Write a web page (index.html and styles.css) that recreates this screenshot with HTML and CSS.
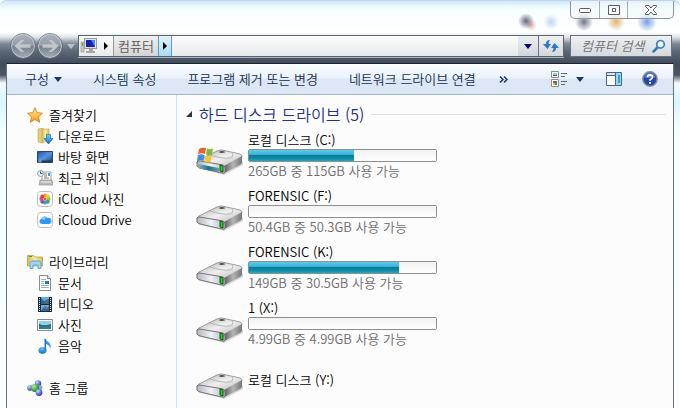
FILE: index.html
```html
<!DOCTYPE html>
<html lang="ko">
<head>
<meta charset="UTF-8">
<meta name="viewport" content="width=device-width, initial-scale=1.0">
<title>컴퓨터</title>
<link rel="stylesheet" href="styles.css">
</head>
<body>
<svg class="defs" aria-hidden="true">
    <defs>
        <linearGradient id="steelTop" x1="0" y1="0" x2="1" y2="1">
            <stop offset="0" stop-color="#a9a9a9"/>
            <stop offset=".5" stop-color="#f0f0f0"/>
            <stop offset="1" stop-color="#b8b8b8"/>
        </linearGradient>
        <linearGradient id="steelFront" x1="0" y1="0" x2="1" y2="0">
            <stop offset="0" stop-color="#b4b4bc"/>
            <stop offset=".5" stop-color="#f1f1f8"/>
            <stop offset="1" stop-color="#b8b8c0"/>
        </linearGradient>
        <linearGradient id="steelSide" x1="0" y1="0" x2="1" y2="0">
            <stop offset="0" stop-color="#5c5c5c"/>
            <stop offset=".5" stop-color="#b4b4b4"/>
            <stop offset="1" stop-color="#777"/>
        </linearGradient>
        <linearGradient id="teal" x1="0" y1="0" x2="1" y2="0">
            <stop offset="0" stop-color="#8fb3bd"/>
            <stop offset=".5" stop-color="#1d7088"/>
            <stop offset="1" stop-color="#6aa0ae"/>
        </linearGradient>
        <linearGradient id="blueScreen" x1="0" y1="0" x2="1" y2="1">
            <stop offset="0" stop-color="#1d4fa5"/>
            <stop offset=".5" stop-color="#5b93dc"/>
            <stop offset="1" stop-color="#153d80"/>
        </linearGradient>
        <linearGradient id="folder" x1="0" y1="0" x2="1" y2="0">
            <stop offset="0" stop-color="#d9b95c"/>
            <stop offset=".5" stop-color="#f8eaa8"/>
            <stop offset="1" stop-color="#dcc064"/>
        </linearGradient>
        <linearGradient id="starFill" x1="0" y1="0" x2="0" y2="1">
            <stop offset="0" stop-color="#fff0a0"/>
            <stop offset="1" stop-color="#f59a1c"/>
        </linearGradient>
        <linearGradient id="blueDown" x1="0" y1="0" x2="0" y2="1">
            <stop offset="0" stop-color="#6fd0fb"/>
            <stop offset="1" stop-color="#0b6fc8"/>
        </linearGradient>
        <radialGradient id="ballBlue" cx=".35" cy=".3" r=".7">
            <stop offset="0" stop-color="#c9d8ff"/>
            <stop offset="1" stop-color="#2438a8"/>
        </radialGradient>
        <radialGradient id="ballGreen" cx=".35" cy=".3" r=".7">
            <stop offset="0" stop-color="#b4f0a0"/>
            <stop offset="1" stop-color="#17841c"/>
        </radialGradient>
        <linearGradient id="navBall" x1="0" y1="0" x2="0" y2="1">
            <stop offset="0" stop-color="#a9b1b9"/>
            <stop offset=".48" stop-color="#949da6"/>
            <stop offset=".5" stop-color="#737e89"/>
            <stop offset="1" stop-color="#a0acb6"/>
        </linearGradient>
    </defs>
    <symbol id="drive" viewBox="0 0 48 27">
        <path d="M2 19 28 26 47 16 47 12 28 21Z" fill="#000" opacity=".15"/>
        <path d="M1 14 Q1 12 3 11 L21 2 Q23 1 26 1 L44 5 Q46 6 46 8 L28 18 2 15Z" fill="url(#steelTop)" stroke="#858585" stroke-width=".8"/>
        <path d="M28 17 46 7 46 13 Q46 15 44 16 L28 24Z" fill="url(#steelSide)"/>
        <path d="M1 13 Q2 12 4 12 L27 16 Q29 17 29 19 V23 Q29 25 26 24 L4 19 Q1 18 1 17Z" fill="url(#steelFront)" stroke="#737373" stroke-width="1"/>
        <path d="M14 6 Q26 10 34 9 Q38 8 36 4" fill="none" stroke="#aaa" stroke-width=".8"/>
        <ellipse cx="26" cy="3" rx="3" ry="1" fill="#555"/>
        <path d="M24 16 27 17V23L24 22Z" fill="#1ed01e" stroke="#175217" stroke-width="1"/>
    </symbol>
</svg>

<div class="window">
    <div class="caption">
        <button class="cap min" aria-label="최소화"><svg width="12" height="7"><rect x=".5" y="2.500" width="11" height="4" rx="1" fill="#fff" stroke="#555d6b"/></svg></button>
        <button class="cap max" aria-label="최대화"><svg width="12" height="10"><path d="M.5.5h11v9H.5zM4.500 3.500v3h3v-3z" fill="#fff" fill-rule="evenodd" stroke="#555d6b"/></svg></button>
        <button class="cap close" aria-label="닫기"><svg width="12" height="10"><path d="M.5.500H4L6 3 8 .5h3.500v1L8 5l3.500 3.500v1H8L6 7 4 9.500H.5v-1L4 5 .5 1.500z" fill="#fff" stroke="#555d6b"/></svg></button>
    </div>

    <div class="navbar">
        <div class="history">
            <button class="round" aria-label="뒤로"><svg width="26" height="26" viewBox="0 0 26 26"><circle cx="13" cy="13" r="11.500" fill="url(#navBall)" stroke="#c3cdd4" stroke-width="1"/><circle cx="13" cy="13" r="12.500" fill="none" stroke="#616d78" stroke-width=".8"/><path d="M4.500 13 11 7h3.500l-4.500 4.300h10.500v3.400H10L14.500 19H11z" fill="#bfc6cb"/></svg></button>
            <button class="round" aria-label="앞으로"><svg width="26" height="26" viewBox="0 0 26 26"><circle cx="13" cy="13" r="11.500" fill="url(#navBall)" stroke="#c3cdd4" stroke-width="1"/><circle cx="13" cy="13" r="12.500" fill="none" stroke="#616d78" stroke-width=".8"/><path d="M21.500 13 15 7h-3.500l4.500 4.300H5.500v3.400H16L11.500 19H15z" fill="#bfc6cb"/></svg></button>
            <button class="recent" aria-label="최근 페이지"><svg width="8" height="5"><path d="M0 0h8L4 5z" fill="#b9c3cc"/></svg></button>
        </div>
        <div class="address">
            <svg class="pc" width="18" height="16" viewBox="0 0 18 16"><rect x="1" y="4" width="3" height="10" fill="#c8ccc8" stroke="#8a8f8a" stroke-width=".6"/><path d="M2 5h1v3H2z" fill="#2cbf2c"/><rect x="4.500" y=".5" width="12" height="10" fill="#e4e4e4" stroke="#999"/><path d="M6 2h9v7H6z" fill="#1620b8"/><path d="M11 2h4v7z" fill="#4a86e8"/><path d="M9 11h4v2h2v2H6v-2h3z" fill="#a5a5a5"/></svg>
            <button class="step" aria-label="루트"><svg width="4" height="8"><path d="M0 0l4 4-4 4z" fill="#000"/></svg></button>
            <button class="crumb">컴퓨터</button>
            <button class="step active" aria-label="하위 폴더"><svg width="4" height="8"><path d="M0 0l4 4-4 4z" fill="#000"/></svg></button>
            <button class="drop" aria-label="이전 위치"><svg width="8" height="5"><path d="M0 0h8L4 5z" fill="#0a0a6e"/></svg></button>
            <button class="refresh" aria-label="새로 고침"><svg width="16" height="14" viewBox="0 0 16 14"><path d="M7 1Q3 1 3 5H0l4.500 5L8 5H5.500Q5.500 3 7 1Z" fill="#2f78c4"/><path d="M9 13q4 0 4-4h3l-4.500-5L8 9h2.500q0 2-1.500 4Z" fill="#2f78c4"/></svg></button>
        </div>
        <form class="search">
            <input type="text" placeholder="컴퓨터 검색" aria-label="컴퓨터 검색">
            <button type="button" aria-label="검색"><svg width="14" height="14" viewBox="0 0 14 14"><path d="M1.500 12.500 6 8" stroke="#3b74b5" stroke-width="2.500" stroke-linecap="round"/><circle cx="8.500" cy="5.300" r="3.800" fill="#eef6fd" stroke="#3d80c6" stroke-width="1.700"/></svg></button>
        </form>
    </div>

    <div class="frame">
        <div class="toolbar">
            <button>구성 <svg width="8" height="5"><path d="M0 0h8L4 5z" fill="#1e395b"/></svg></button>
            <button>시스템 속성</button>
            <button>프로그램 제거 또는 변경</button>
            <button>네트워크 드라이브 연결</button>
            <button class="more" aria-label="추가 명령"><svg width="9" height="7"><path d="M1 .5l3 3-3 3M5 .5l3 3-3 3" fill="none" stroke="#1e395b" stroke-width="1.500"/></svg></button>
            <div class="tools">
                <button aria-label="보기 변경"><svg width="16" height="16"><path d="M.5.5h7v6h-7zM.5 8.500h7v7h-7z" fill="#fff" stroke="#8d8d8d"/><path d="M2 2h4v2H2z" fill="#8cc8ef"/><path d="M2 4h4v1H2z" fill="#25703c"/><path d="M2 10h2v2H2z" fill="#d33"/><path d="M4 10h2v2H4z" fill="#37c"/><path d="M2 12h2v2H2z" fill="#eb2"/><path d="M4 12h2v2H4z" fill="#2a3"/><path d="M10 2.500h6M10 5.500h4M10 10.500h6M10 13.500h4" stroke="#56657a"/></svg></button>
                <button aria-label="보기 옵션"><svg width="8" height="5"><path d="M0 0h8L4 5z" fill="#1e395b"/></svg></button>
                <button class="pane" aria-label="미리 보기 창"><svg width="16" height="14"><path d="M.5.500h15v13H.5z" fill="#fff" stroke="#4a6684"/><path d="M1 1h14v2H1z" fill="#d7e1ec"/><path d="M1 3.500h9M9.500 1v12" stroke="#4a6684"/><path d="M10 1h5v12h-5z" fill="#8fdcee"/><path d="M12 3h2v8h-2z" fill="#4a9bc0"/></svg></button>
                <button aria-label="도움말"><svg width="16" height="16" viewBox="0 0 16 16"><circle cx="8" cy="8" r="7.200" fill="#2444ae" stroke="#8a8f96" stroke-width="1.500"/><path d="M2.500 7a5.500 5.500 0 0 1 11 0z" fill="#6d8fe0" opacity=".6"/><path d="M5.500 6.200Q5.500 4 8 4t2.500 2.100Q10.500 7.500 8 9v.8" fill="none" stroke="#fff" stroke-width="1.800"/><path d="M7 11h2v1.800H7z" fill="#fff"/></svg></button>
            </div>
        </div>

        <div class="body">
            <nav class="sidebar">
                <ul>
                    <li class="group"><a href="#"><svg width="16" height="16" viewBox="0 0 16 16"><path d="M8 .7l2.200 5 5.300.5-4 3.700 1.200 5.400L8 12.500l-4.700 2.800 1.200-5.400-4-3.700 5.300-.5z" fill="url(#starFill)" stroke="#d8811c" stroke-width=".9"/></svg>즐겨찾기</a></li>
                    <li><a href="#"><svg width="16" height="16" viewBox="0 0 16 16"><path d="M1 1l5-1v15l-5-1z" fill="#e5cd7e" stroke="#c3a249" stroke-width=".6"/><path d="M5 1h7v13H5z" fill="url(#folder)" stroke="#c3a249" stroke-width=".6"/><path d="M9.500 6.500h4v4H16L11.500 16 7 10.500h2.500z" fill="url(#blueDown)" stroke="#0b5ba6" stroke-width=".6"/></svg>다운로드</a></li>
                    <li><a href="#"><svg width="16" height="16" viewBox="0 0 16 16"><path d="M.5 2.500h15v11H.5z" fill="url(#blueScreen)" stroke="#29456f"/><path d="M1 11.500h14V13H1z" fill="#26364f"/><circle cx="3" cy="12" r="1.700" fill="#48aee9"/><path d="M2 11h1v1H2z" fill="#f60"/></svg>바탕 화면</a></li>
                    <li><a href="#"><svg width="16" height="16" viewBox="0 0 16 16"><path d="M5 2h9v9H5z" fill="#fff" stroke="#8e8e8e" stroke-width=".8"/><path d="M7 4h3M7 6h3M7 8h5" stroke="#777"/><path d="M11 3h2v3h-2z" fill="#4c97d3"/><path d="M3 10h12l1 5H2z" fill="#b9bbbd" stroke="#8b8b8b" stroke-width=".6"/><path d="M4 12h10" stroke="#eee"/><circle cx="3.500" cy="3.500" r="3" fill="#edf4fa" stroke="#879bb0"/><path d="M3.500 1.500v2h2" fill="none" stroke="#456"/></svg>최근 위치</a></li>
                    <li><a href="#"><svg width="16" height="16" viewBox="0 0 16 16"><rect x=".5" y=".5" width="15" height="15" rx="3" fill="#fff" stroke="#bdbdbd"/><circle cx="8" cy="4.500" r="2" fill="#f7941d"/><circle cx="10.700" cy="5.500" r="2" fill="#f0d020"/><circle cx="11.600" cy="8" r="2" fill="#98ca3c"/><circle cx="10.700" cy="10.700" r="2" fill="#2caa72"/><circle cx="8" cy="11.600" r="2" fill="#3c9bd8"/><circle cx="5.300" cy="10.700" r="2" fill="#7558b0"/><circle cx="4.400" cy="8" r="2" fill="#d64b90"/><circle cx="5.300" cy="5.500" r="2" fill="#ec3a34"/><circle cx="8" cy="8" r="1.500" fill="#b06a3c"/></svg>iCloud 사진</a></li>
                    <li><a href="#"><svg width="16" height="16" viewBox="0 0 16 16"><rect x=".5" y=".5" width="15" height="15" rx="3" fill="#fff" stroke="#bdbdbd"/><path d="M4.800 12a2.500 2.500 0 0 1-.6-4.900A3.600 3.600 0 0 1 10.500 6 3 3 0 0 1 12 12z" fill="#2f97f0"/><path d="M4.200 7.200a3.500 3.500 0 0 1 6-1.500Q8 6 7.500 8.500 6 7 4.200 7.200z" fill="#7cc8fa"/></svg>iCloud Drive</a></li>
                </ul>
                <ul>
                    <li class="group"><a href="#"><svg width="16" height="16" viewBox="0 0 16 16"><path d="M.5 3V1.500h6L8 3h7.500v9H.5z" fill="url(#folder)" stroke="#b99c46" stroke-width=".8"/><path d="M2 2h3v1H2z" fill="#3ba83b"/><path d="M3 14.500V9q0-2 2-2h7q2 0 2 2v5.500h-3V11H6v3.500z" fill="#9ed8ee" stroke="#4a9fc6" stroke-width=".8"/></svg>라이브러리</a></li>
                    <li><a href="#"><svg width="16" height="16" viewBox="0 0 16 16"><path d="M2.500.5h8l3 3v12h-11z" fill="#fff" stroke="#8c8c8c"/><path d="M10.500.5v3h3" fill="#ddd" stroke="#8c8c8c"/><path d="M4 4.500h5M4 6.500h3M4 8.500h3M4 10.500h8M4 12.500h8" stroke="#9bb4d4"/><path d="M8 6h4v3H8z" fill="#2b76b9"/></svg>문서</a></li>
                    <li><a href="#"><svg width="16" height="16" viewBox="0 0 16 16"><path d="M1 1h14v15H1z" fill="#222a31"/><path d="M4 1h8v7H4zM4 9h8v6H4z" fill="#5daeea"/><path d="M4 2l3 3 5-2v5H4zM4 15l3-4 2 2 3-3v5z" fill="#2568a8"/><path d="M8 6l3-2-1 4zM7 10l3 1-2 3z" fill="#b4552f"/><path d="M2.500 2v14M13.500 2v14" stroke="#fff" stroke-dasharray="1 1"/></svg>비디오</a></li>
                    <li><a href="#"><svg width="16" height="16" viewBox="0 0 16 16"><path d="M.5 2.500h15v11H.5z" fill="#fff" stroke="#8a8a8a"/><path d="M2 4h12v4H2z" fill="#92cdf2"/><path d="M2 8h12v4H2z" fill="#2c7aa6"/><path d="M2 6.500Q6 10 14 7v2.500H2z" fill="#2b7550"/></svg>사진</a></li>
                    <li><a href="#"><svg width="16" height="16" viewBox="0 0 16 16"><path d="M7.500 0q1 2 4 4 3.500 3 1.500 7 0-4-4-5v7z" fill="#3a9ad8"/><ellipse cx="5.500" cy="12.500" rx="3.800" ry="3" fill="url(#blueDown)" stroke="#1d75b6" stroke-width=".6"/><path d="M8.300 1v11.500" stroke="#1d75b6" stroke-width="1.500"/></svg>음악</a></li>
                </ul>
                <ul>
                    <li class="group"><a href="#"><svg width="16" height="16" viewBox="0 0 16 16"><circle cx="11" cy="3.500" r="3.200" fill="url(#ballBlue)"/><circle cx="3" cy="8" r="2.800" fill="url(#ballBlue)"/><circle cx="13" cy="7.500" r="2.500" fill="#8fa4d4"/><circle cx="8" cy="8" r="4" fill="url(#ballGreen)"/><circle cx="12" cy="12.500" r="3.400" fill="url(#ballBlue)"/></svg>홈 그룹</a></li>
                </ul>
            </nav>

            <main class="content">
                <h1><svg width="6" height="6"><path d="M6 0v6H0z" fill="#333"/></svg>하드 디스크 드라이브 (5)</h1>
                <ul class="drives">
                    <li>
                        <div class="disk">
                            <svg width="48" height="27"><use href="#drive"/></svg>
                            <svg class="flag" width="30" height="28" viewBox="0 0 30 28"><path d="M2 17 23 21V25L5 22Q2 21 2 20Z" fill="url(#teal)"/><path d="M3 2q3-2 7-1L9 7Q6 5.500 2 7z" fill="#e8602a"/><path d="M11 1.500q3 1.500 6 0L16 8q-3 1-6-.5z" fill="#7fba30"/><path d="M2 8q3-1.500 6.500 0l-1 6q-3-1.500-6.500 0z" fill="#3f8fd8"/><path d="M9.500 8.500q3 1.500 6 .5l-1 6q-3 1-6-.5z" fill="#f8c52c"/></svg>
                        </div>
                        <div class="info">
                            <label for="driveC">로컬 디스크 (C:)</label>
                            <progress id="driveC" value="56" max="100"></progress>
                            <span>265GB 중 115GB 사용 가능</span>
                        </div>
                    </li>
                    <li>
                        <div class="disk"><svg width="48" height="27"><use href="#drive"/></svg></div>
                        <div class="info">
                            <label for="driveF">FORENSIC (F:)</label>
                            <progress id="driveF" value="0" max="100"></progress>
                            <span>50.4GB 중 50.3GB 사용 가능</span>
                        </div>
                    </li>
                    <li>
                        <div class="disk"><svg width="48" height="27"><use href="#drive"/></svg></div>
                        <div class="info">
                            <label for="driveK">FORENSIC (K:)</label>
                            <progress id="driveK" value="80" max="100"></progress>
                            <span>149GB 중 30.5GB 사용 가능</span>
                        </div>
                    </li>
                    <li>
                        <div class="disk"><svg width="48" height="27"><use href="#drive"/></svg></div>
                        <div class="info">
                            <label for="driveX">1 (X:)</label>
                            <progress id="driveX" value="0" max="100"></progress>
                            <span>4.99GB 중 4.99GB 사용 가능</span>
                        </div>
                    </li>
                    <li>
                        <div class="disk"><svg width="48" height="27"><use href="#drive"/></svg></div>
                        <div class="info plain">로컬 디스크 (Y:)</div>
                    </li>
                </ul>
            </main>
        </div>
    </div>
</div>
</body>
</html>
```
FILE: styles.css
```css
* {
    box-sizing: border-box;
}
body {
    margin: 0;
    overflow: hidden;
    font-family: "Noto Sans CJK KR", sans-serif;
    font-size: 13px;
    font-weight: 350;
    line-height: 20px;
    color: #000;
}
ul {
    list-style: none;
    margin: 0;
    padding: 0;
}
button {
    display: flex;
    align-items: center;
    justify-content: center;
    border: 0;
    padding: 0;
    background: none;
    font: inherit;
    color: inherit;
    white-space: nowrap;
}
svg {
    display: block;
    flex: none;
}
.defs {
    position: absolute;
    width: 0;
    height: 0;
}

/* glass frame */
.window {
    display: flex;
    flex-direction: column;
    height: 100vh;
    padding: 0 6px;
    border-top: 1px solid #c3d2e4;
    border-radius: 6px 6px 0 0;
    background:
        radial-gradient(circle at 526px 20px, #626a7d 0, transparent 8px),
        radial-gradient(circle at 531px 24px, #f0aab4 0, transparent 6px),
        radial-gradient(circle at 551px 21px, #c3d3ef 0, transparent 8px),
        radial-gradient(circle at 584px 21px, #6e7784 0, transparent 9px),
        radial-gradient(circle at 616px 21px, #dfb577 0, transparent 9px),
        radial-gradient(circle at 647px 21px, #7ba0df 0, transparent 10px),
        linear-gradient(#cfe8fd 0, #f6ffff 8px, #fff 31px, #dfe5ea 36px, #7b8693 43px, #5b6675 51px, #414c5c 62px, #4b5666 74px, #f2fafd 82px, #d8f6ff 100px, #f4feff 130px, #fbffff 100%);
}
.caption {
    display: flex;
    flex: none;
    align-self: flex-end;
    height: 18px;
    border: 1px solid #8b949f;
    border-top: 0;
    border-radius: 0 0 5px 5px;
    background: #f3f9fc99;
}
.cap {
    width: 28px;
}
.cap + .cap {
    border-left: 1px solid #a5adb7;
}
.cap.close {
    width: 46px;
}
.navbar {
    display: flex;
    flex: none;
    align-items: center;
    height: 44px;
    padding: 14px 2px 4px 3px;
}
.history {
    display: flex;
    align-items: center;
}
.round {
    width: 27px;
    height: 26px;
}
.recent {
    width: 15px;
}
.address {
    display: flex;
    flex: 1;
    height: 22px;
    border: 1px solid #59636b;
    box-shadow: 0 1px 0 #a8b0b8;
    background: linear-gradient(#fbfbfb, #e8e9eb);
}
.pc {
    align-self: center;
    margin: 0 1px;
}
.step {
    width: 14px;
}
.crumb {
    padding: 0 4px;
    border-left: 1px solid #9a9a9a;
    background: linear-gradient(#f0f0f0, #d5d5d5);
    color: #555;
}
.step.active {
    border: 1px solid #5d9cbf;
    border-width: 0 1px;
    background: linear-gradient(#e4f3fc, #a8daf5);
}
.drop {
    width: 20px;
    margin-left: auto;
    background: linear-gradient(#eceef0, #d3d6db);
}
.refresh {
    width: 25px;
    border-left: 1px solid #69727a;
    background: linear-gradient(#eff1f3, #d3d8dd);
}
.search {
    display: flex;
    width: 102px;
    height: 22px;
    margin-left: 6px;
    padding: 0 5px 0 10px;
    border: 1px solid #68717a;
    background: linear-gradient(#eff1f2, #d4d9de);
}
.search input {
    flex: 1;
    min-width: 0;
    padding: 0;
    border: 0;
    outline: 0;
    background: none;
    font: inherit;
    font-style: italic;
}
.search input::placeholder {
    color: #6a6e72;
}

/* client area */
.frame {
    display: flex;
    flex: 1;
    flex-direction: column;
    border: 1px solid #2b3038;
    border-color: #1d232b #69717a #69717a;
    border-bottom: 0;
    background: #fcfcfc;
}
.toolbar {
    display: flex;
    flex: none;
    gap: 31px;
    height: 31px;
    padding: 0 15px 0 18px;
    border-bottom: 1px solid #a3b4cf;
    background: linear-gradient(#fbfdff 0, #e9f2fb 48%, #dce6f4 50%, #dde8f6 100%);
    color: #142d4e;
}
.toolbar button {
    gap: 5px;
}
.toolbar .more {
    margin-left: -8px;
}
.tools {
    display: flex;
    gap: 9px;
    margin-left: auto;
}
.tools .pane {
    margin: 0 11px 0 13px;
}
.body {
    display: flex;
    flex: 1;
}
.sidebar {
    display: flex;
    flex-direction: column;
    gap: 21px;
    width: 170px;
    padding: 9px 0 0 20px;
    border-right: 1px solid #d0e1f5;
}
.sidebar a {
    display: flex;
    align-items: center;
    gap: 5px;
    height: 21px;
    padding-left: 10px;
    color: #000;
    text-decoration: none;
}
.sidebar .group a {
    gap: 6px;
    padding-left: 0;
}
.content {
    flex: 1;
    padding: 8px 7px 0 9px;
}
h1 {
    display: flex;
    align-items: center;
    gap: 7px;
    margin: 0;
    color: #1e3287;
    font-size: 16px;
    font-weight: 350;
    line-height: 22px;
}
h1::after {
    content: "";
    flex: 1;
    height: 1px;
    background: #e0e0e0;
}
.drives {
    padding: 5px 0 0 10px;
}
.drives li {
    display: flex;
    gap: 4px;
    height: 56px;
}
.disk {
    position: relative;
    padding-top: 19px;
}
.flag {
    position: absolute;
    top: 17px;
    left: 0;
}
.info {
    display: flex;
    flex-direction: column;
    width: 189px;
}
.info label {
    line-height: 19px;
}
.info span {
    color: #6d6d6d;
    line-height: 18px;
}
.info.plain {
    padding-top: 16px;
}
progress {
    display: block;
    width: 100%;
    height: 13px;
    border: 1px solid #8e8e8e;
    border-radius: 2px;
    background: #fdfdfd;
    appearance: none;
}
progress::-webkit-progress-bar {
    background: linear-gradient(#f2f2f2, #fff);
}
progress::-webkit-progress-value {
    background: linear-gradient(#5fcbe6 0, #35b3d3 45%, #0c7a96 50%, #0c8aa9 75%, #26a6c4 100%);
}
```
